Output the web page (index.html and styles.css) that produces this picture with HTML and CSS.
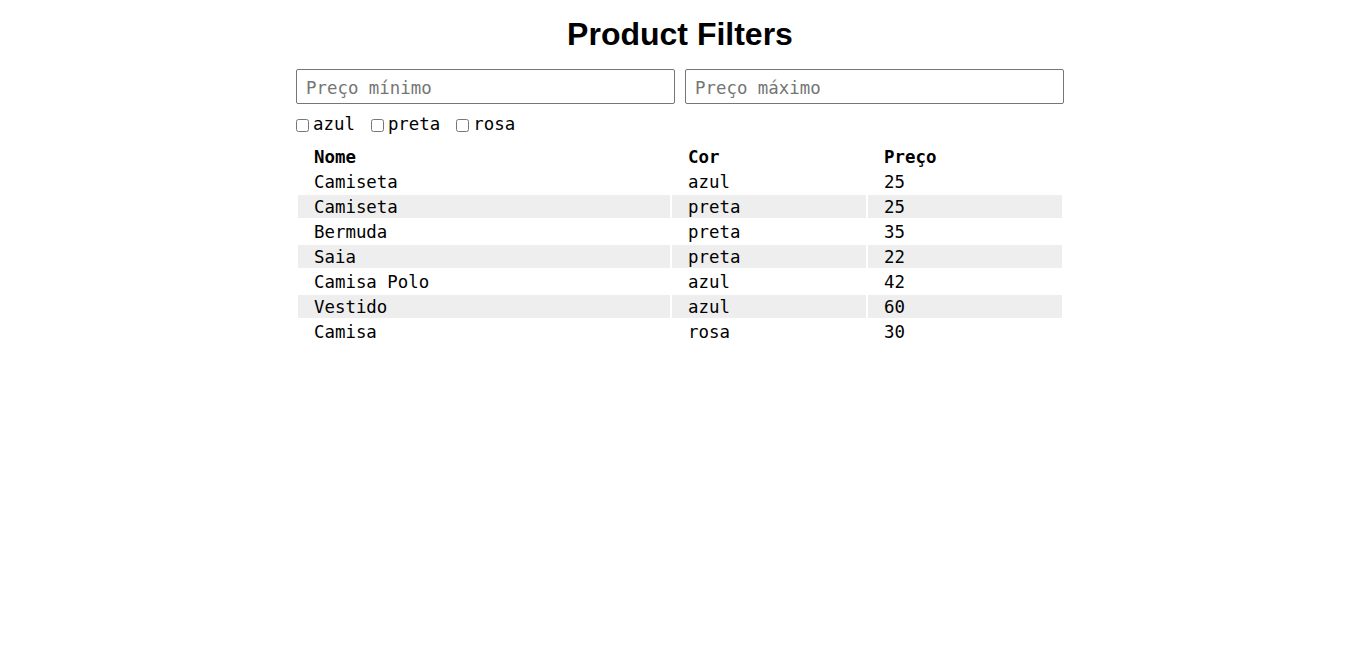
FILE: index.html
```html
<!DOCTYPE html>
<html lang="pt">
<head>
<meta charset="utf-8">
<title>Product Filters</title>
<link rel="stylesheet" href="styles.css">
</head>
<body>
<div class="container">
  <h1 class="title">Product Filters</h1>
  <div class="price-row">
    <input class="price-input" type="text" placeholder="Preço mínimo">
    <input class="price-input" type="text" placeholder="Preço máximo">
  </div>
  <div class="colors">
    <label class="color-option"><input class="check" type="checkbox">azul</label>
    <label class="color-option"><input class="check" type="checkbox">preta</label>
    <label class="color-option"><input class="check" type="checkbox">rosa</label>
  </div>
  <table class="products">
    <colgroup>
      <col class="col-name">
      <col class="col-color">
      <col class="col-price">
    </colgroup>
    <thead>
      <tr><th>Nome</th><th>Cor</th><th>Preço</th></tr>
    </thead>
    <tbody>
      <tr><td>Camiseta</td><td>azul</td><td>25</td></tr>
      <tr><td>Camiseta</td><td>preta</td><td>25</td></tr>
      <tr><td>Bermuda</td><td>preta</td><td>35</td></tr>
      <tr><td>Saia</td><td>preta</td><td>22</td></tr>
      <tr><td>Camisa Polo</td><td>azul</td><td>42</td></tr>
      <tr><td>Vestido</td><td>azul</td><td>60</td></tr>
      <tr><td>Camisa</td><td>rosa</td><td>30</td></tr>
    </tbody>
  </table>
</div>
</body>
</html>
```

FILE: styles.css
```css
html, body {
  margin: 0;
  padding: 0;
  background: #ffffff;
  color: #000000;
}

body {
  font-family: "DejaVu Sans Mono", "Liberation Mono", monospace;
  font-size: 17.4px;
}

.container {
  width: 768px;
  margin: 0 auto;
  padding-top: 14px;
}

.title {
  font-family: "Liberation Sans", Arial, sans-serif;
  font-size: 32px;
  font-weight: bold;
  line-height: 40px;
  text-align: center;
  margin: 0 0 15px 0;
}

.price-row {
  display: flex;
  gap: 10px;
}

.price-input {
  flex: 1;
  min-width: 0;
  height: 35px;
  box-sizing: border-box;
  border: 1px solid #767676;
  border-radius: 2px;
  padding: 2px 9px 0 9px;
  font-family: "DejaVu Sans Mono", "Liberation Mono", monospace;
  font-size: 17.4px;
  color: #000;
  background: #fff;
}

.price-input::placeholder {
  color: #757575;
}

.colors {
  display: flex;
  gap: 16px;
  margin-top: 10px;
  height: 22px;
  align-items: center;
}

.color-option {
  display: inline-flex;
  align-items: center;
  line-height: 20px;
  padding-bottom: 2px;
}

.check {
  width: 13px;
  height: 13px;
  margin: 2px 4px 0 0;
}

.products {
  width: 768px;
  margin-top: 7px;
  border-spacing: 2px;
  table-layout: fixed;
}

.col-name { width: 372px; }
.col-color { width: 194px; }
.col-price { width: 194px; }

.products th,
.products td {
  text-align: left;
  padding: 2px 16px 0 16px;
  line-height: 21px;
  font-size: 17.4px;
}

.products th {
  font-weight: bold;
}

.products tbody tr:nth-child(even) td {
  background: #eeeeee;
}
```
